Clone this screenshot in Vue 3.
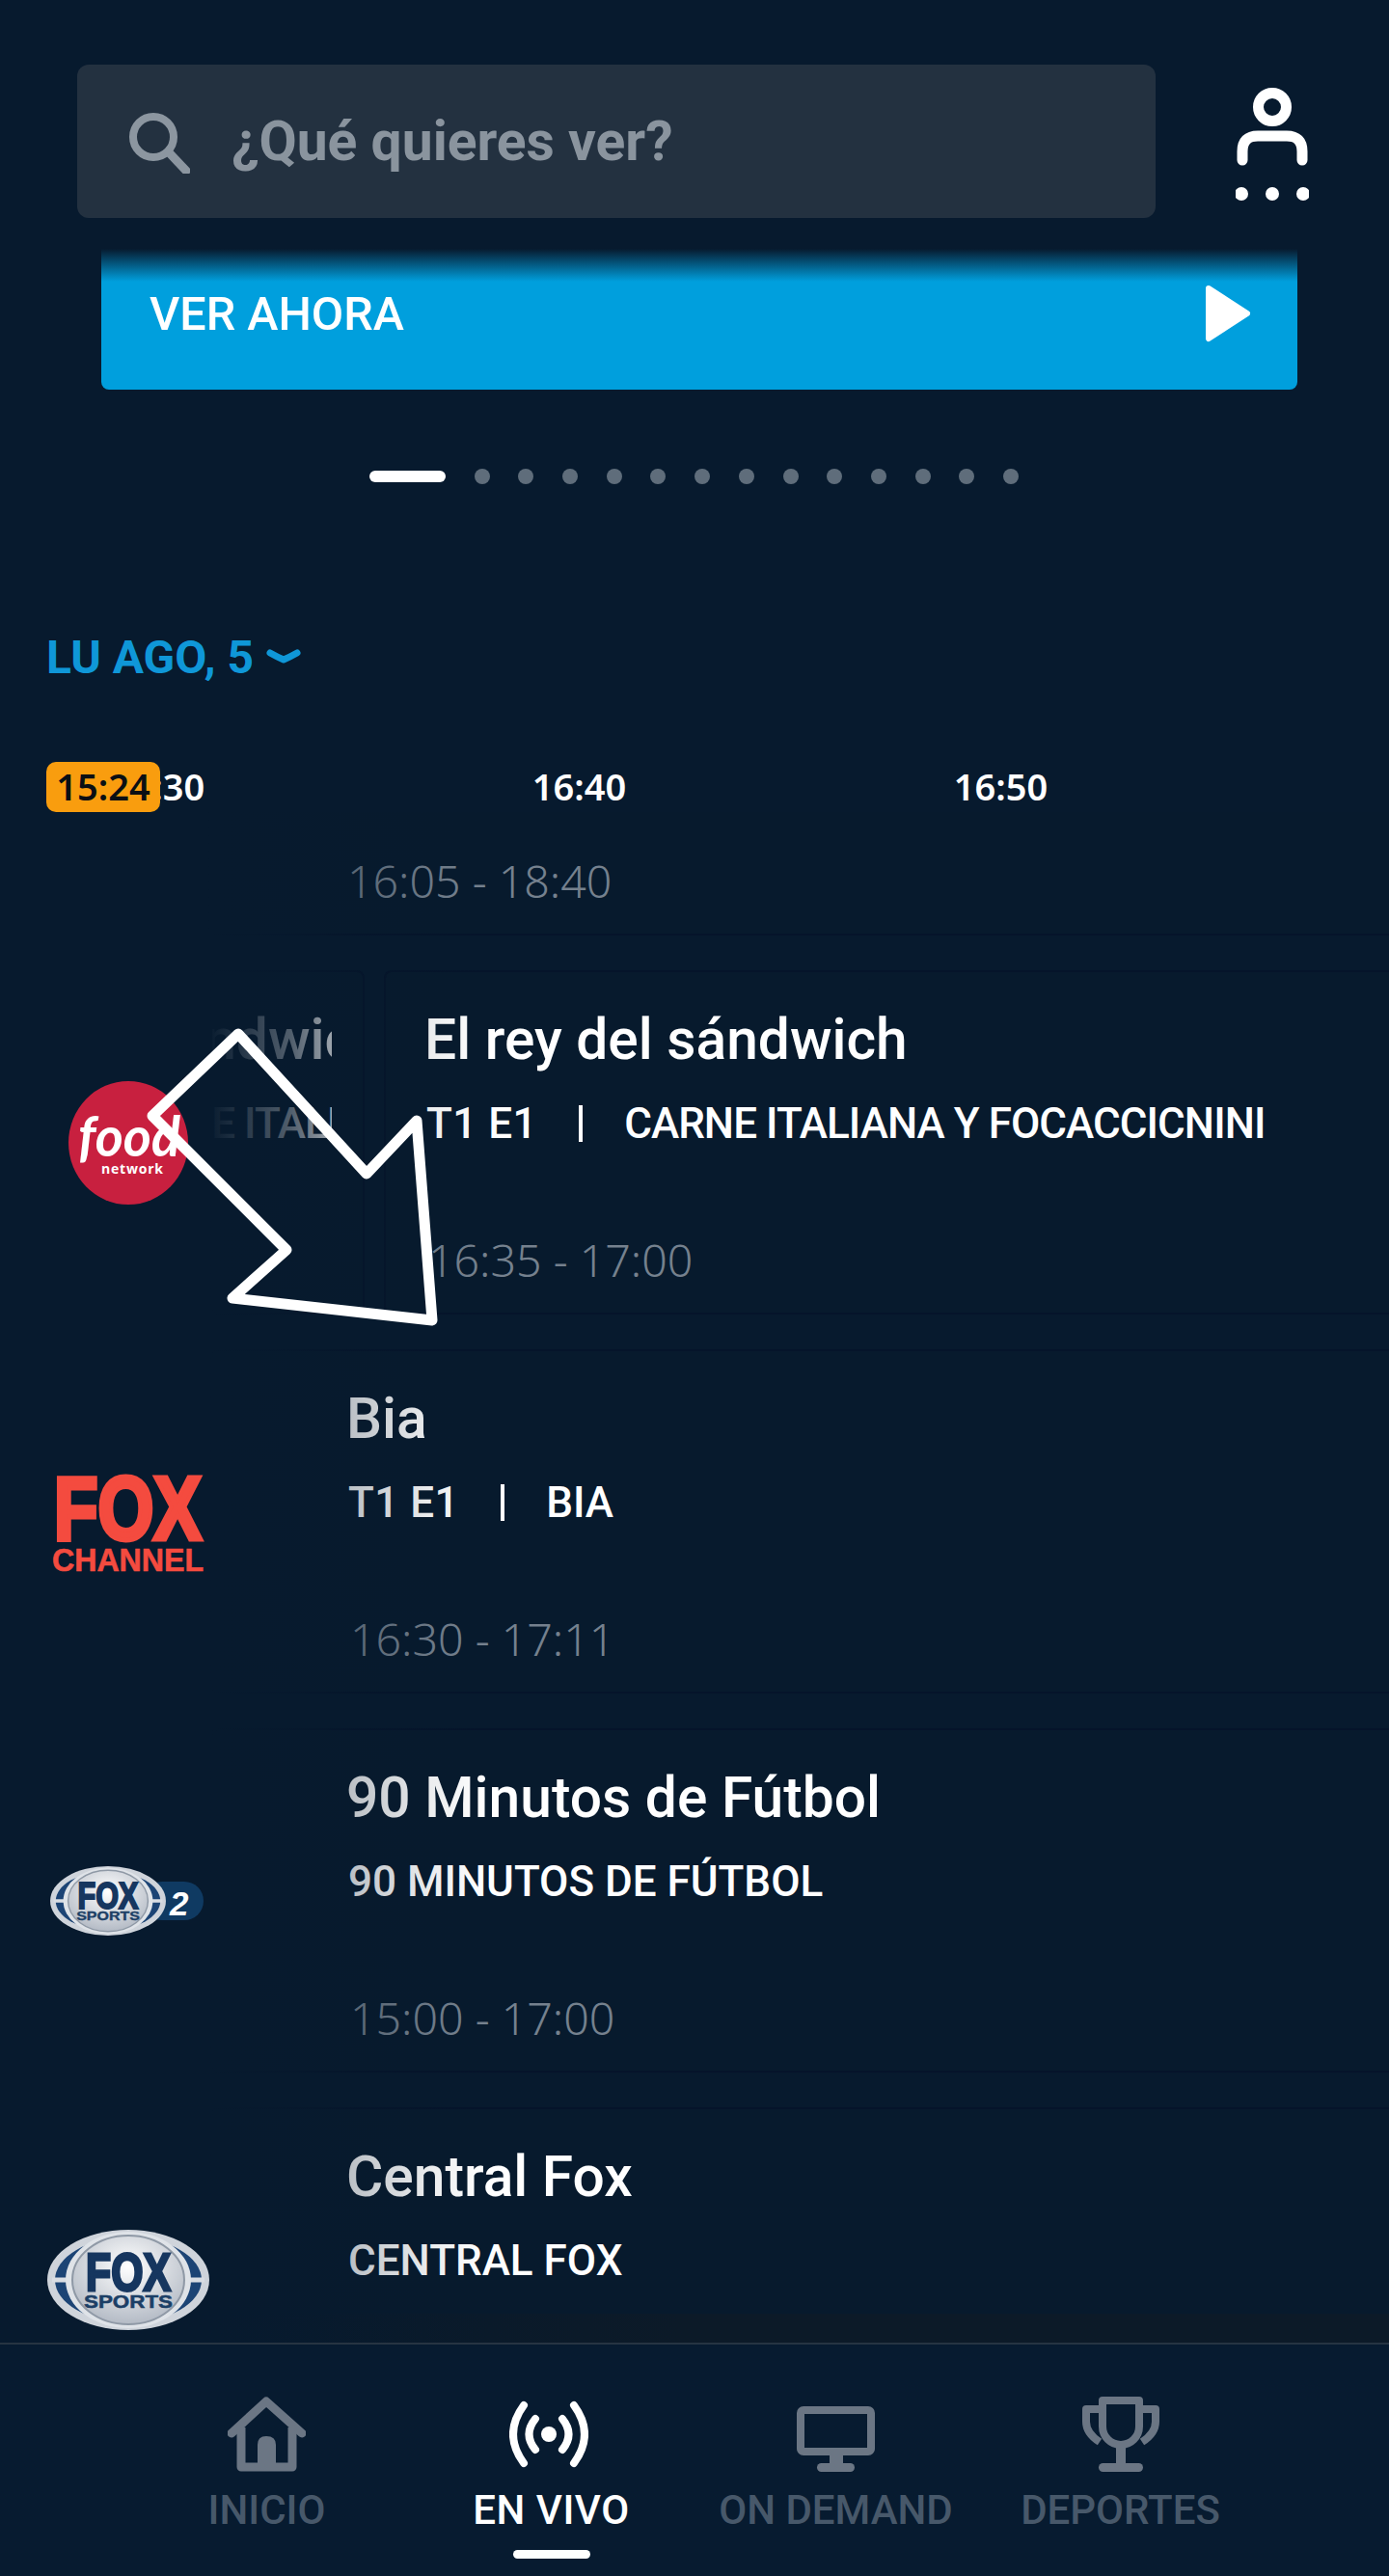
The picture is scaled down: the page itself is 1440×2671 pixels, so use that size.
<script setup>
const ticks = ["16:30", "16:40", "16:50"];
const dots = 13;

const rows = [
  { id: "prev", title: "Sin título", sub: ["T1 E1"], time: "16:05 - 18:40", logo: "" },
  {
    id: "food",
    title: "El rey del sándwich",
    sub: ["T1 E1", "CARNE ITALIANA Y FOCACCICNINI"],
    time: "16:35 - 17:00",
    logo: "food",
    before: true,
  },
  { id: "fox", title: "Bia", sub: ["T1 E1", "BIA"], time: "16:30 - 17:11", logo: "fox" },
  {
    id: "fs2",
    title: "90 Minutos de Fútbol",
    sub: ["90 MINUTOS DE FÚTBOL"],
    time: "15:00 - 17:00",
    logo: "fs2",
  },
  { id: "fs", title: "Central Fox", sub: ["CENTRAL FOX"], time: "", logo: "fs" },
];

const nav = [
  { id: "home", label: "INICIO" },
  { id: "live", label: "EN VIVO", active: true },
  { id: "demand", label: "ON DEMAND" },
  { id: "sports", label: "DEPORTES" },
];

// the small fox sports logo is the same badge, squeezed
const badgeTransform = (logo) =>
  logo === "fs2" ? "translate(64 65) scale(.714 .69) translate(-85 -65)" : "";
</script>

<template>
  <div class="page">
    <header class="top">
      <div class="search">
        <svg class="search-icon" viewBox="0 0 64 64" width="64" height="64">
          <circle cx="26" cy="26" r="21" fill="none" stroke="#8c96a0" stroke-width="8" />
          <path d="M42 42 L60 61" stroke="#8c96a0" stroke-width="9" stroke-linecap="round" />
        </svg>
        <span class="search-text">¿Qué quieres ver?</span>
      </div>
      <svg class="profile" viewBox="0 0 76 118" width="76" height="118">
        <circle cx="38" cy="20" r="14.5" fill="none" stroke="#fff" stroke-width="11" />
        <path d="M7 75 V66 Q7 50 23 50 H53 Q69 50 69 66 V75" fill="none" stroke="#fff" stroke-width="11" stroke-linecap="round" />
        <circle cx="6" cy="110" r="7" fill="#fff" />
        <circle cx="38" cy="110" r="7" fill="#fff" />
        <circle cx="70" cy="110" r="7" fill="#fff" />
      </svg>
    </header>

    <div class="hero">
      <span>VER AHORA</span>
      <svg viewBox="0 0 48 60" width="48" height="60">
        <path d="M4 4 L44 30 L4 56 Z" fill="#fff" stroke="#fff" stroke-width="6" stroke-linejoin="round" />
      </svg>
    </div>

    <div class="dots">
      <i class="pill"></i>
      <i v-for="n in dots" :key="n" class="dot"></i>
    </div>

    <div class="date">
      <span>LU AGO, 5</span>
      <svg viewBox="0 0 36 18" width="36" height="18">
        <path d="M4 4 Q11 8 18 11 Q25 8 32 4" fill="none" stroke="#0f97d8" stroke-width="7" stroke-linecap="round" stroke-linejoin="round" />
      </svg>
    </div>

    <div class="axis">
      <span v-for="t in ticks" :key="t" class="tick">{{ t }}</span>
      <span class="now">15:24</span>
    </div>

    <section class="list">
      <div class="fade"></div>
      <div v-for="row in rows" :key="row.id" class="row">
        <div class="logo">
          <svg v-if="row.logo === 'food'" viewBox="0 0 170 130" width="170" height="130">
            <ellipse cx="85" cy="65" rx="62" ry="64" fill="#c8203f" />
            <text x="33" y="79" class="food" textLength="106" lengthAdjust="spacingAndGlyphs">food</text>
            <text x="57" y="97" class="network" textLength="64">network</text>
          </svg>
          <svg v-else-if="row.logo === 'fox'" viewBox="0 0 170 130" width="170" height="130">
            <text x="8" y="83" class="fox-big" textLength="153" lengthAdjust="spacingAndGlyphs">FOX</text>
            <text x="6" y="116" class="fox-small" textLength="157" lengthAdjust="spacingAndGlyphs">CHANNEL</text>
          </svg>
          <svg v-else-if="row.logo === 'fs2' || row.logo === 'fs'" viewBox="0 0 170 130" width="170" height="130">
            <defs>
              <radialGradient :id="row.id + '-core'" cx="50%" cy="35%" r="75%">
                <stop offset="0" stop-color="#fff" />
                <stop offset="1" stop-color="#a8b0bc" />
              </radialGradient>
            </defs>
            <template v-if="row.logo === 'fs2'">
              <rect x="100" y="45" width="63" height="40" rx="20" fill="#0f3a62" />
              <text x="128" y="80" class="fs2-num">2</text>
            </template>
            <g :transform="badgeTransform(row.logo)">
              <ellipse cx="85" cy="65" rx="84" ry="52" fill="#cfd4db" />
              <ellipse cx="85" cy="65" rx="76" ry="44" fill="#1c4475" />
              <path d="M6 65 H164" stroke="#d9dde3" stroke-width="5" />
              <ellipse cx="85" cy="65" rx="65" ry="50" fill="#dfe3e8" />
              <ellipse cx="85" cy="65" rx="58" ry="46" :fill="'url(#' + row.id + '-core)'" stroke="#8f99a6" stroke-width="2" />
              <text x="41" y="76" class="fs-fox" textLength="88" lengthAdjust="spacingAndGlyphs">FOX</text>
              <text x="39" y="94" class="fs-sports" textLength="92" lengthAdjust="spacingAndGlyphs">SPORTS</text>
            </g>
          </svg>
        </div>

        <div class="track">
          <div v-if="row.before" class="card card-before">
            <div class="clip">
              <div class="shifted">
                <div class="title">{{ row.title }}</div>
                <div class="sub long">
                  <span>{{ row.sub[0] }}</span><i class="bar"></i><span>{{ row.sub[1] }}</span>
                </div>
              </div>
            </div>
          </div>
          <div class="card" :class="{ 'card-open': !row.before }">
            <div class="title">{{ row.title }}</div>
            <div class="sub" :class="{ long: row.before }">
              <template v-for="(part, i) in row.sub" :key="i">
                <i v-if="i > 0" class="bar"></i>
                <span>{{ part }}</span>
              </template>
            </div>
            <div class="time">{{ row.time }}</div>
          </div>
        </div>
      </div>
      <div class="list-end"></div>
    </section>

    <nav class="nav">
      <div v-for="item in nav" :key="item.id" class="nav-item" :class="{ active: item.active }">
        <svg v-if="item.id === 'home'" viewBox="0 0 81 78" width="81" height="78">
          <path d="M4 38 L40 5 L77 38" fill="none" stroke="#6b7684" stroke-width="9" stroke-linecap="round" stroke-linejoin="round" />
          <path d="M14 32 V73 H67 V32" fill="none" stroke="#6b7684" stroke-width="9" stroke-linejoin="round" />
          <path d="M31 73 V50 Q31 41 40 41 Q50 41 50 50 V73 Z" fill="#6b7684" />
        </svg>
        <svg v-else-if="item.id === 'live'" class="live-icon" viewBox="0 0 82 68" width="82" height="78">
          <circle cx="41" cy="34" r="8" fill="#fff" />
          <path d="M15 4 Q-7 34 15 64 M67 4 Q89 34 67 64" fill="none" stroke="#fff" stroke-width="8" stroke-linecap="round" />
          <path d="M27 18 Q14 34 27 50 M55 18 Q68 34 55 50" fill="none" stroke="#fff" stroke-width="8" stroke-linecap="round" />
        </svg>
        <svg v-else-if="item.id === 'demand'" viewBox="0 0 81 78" width="81" height="78">
          <rect x="4" y="14" width="73" height="43" rx="3" fill="none" stroke="#6b7684" stroke-width="8" />
          <rect x="34" y="60" width="14" height="10" fill="#6b7684" />
          <rect x="21" y="69" width="39" height="9" rx="4.5" fill="#6b7684" />
        </svg>
        <svg v-else viewBox="0 0 80 78" width="80" height="78">
          <path d="M21 4 H59 V31 A19 19 0 0 1 21 31 Z" fill="none" stroke="#6b7684" stroke-width="8" stroke-linejoin="round" />
          <path d="M20 13 H4 V26 Q4 38 18 47 M60 13 H76 V26 Q76 38 62 47" fill="none" stroke="#6b7684" stroke-width="8" stroke-linejoin="round" />
          <rect x="35" y="52" width="10" height="20" fill="#6b7684" />
          <rect x="17" y="69" width="46" height="9" rx="4.5" fill="#6b7684" />
        </svg>
        <span class="nav-label">{{ item.label }}</span>
        <i v-if="item.active" class="nav-mark"></i>
      </div>
    </nav>

    <svg class="arrow" viewBox="0 0 310 320" width="310" height="320">
      <path d="M97 12 L230 157 L282 102 L298 309 L91 286 L147 236 L8 97 Z" fill="none" stroke="#fff" stroke-width="11" stroke-linejoin="round" />
    </svg>
  </div>
</template>

<style scoped>
.page {
  position: relative;
  width: 1440px;
  height: 2671px;
  overflow: hidden;
  background: #071a2e;
  font-family: Roboto, "Liberation Sans", sans-serif;
  color: #fff;
}

.top {
  display: flex;
  align-items: flex-start;
  padding: 67px 0 0 80px;
}

.search {
  display: flex;
  align-items: center;
  width: 1118px;
  height: 159px;
  padding-left: 53px;
  box-sizing: border-box;
  background: #233140;
  border-radius: 12px;
}

.search-icon {
  margin-top: 2px;
}

.search-text {
  margin-left: 43px;
  font-size: 57px;
  font-weight: 700;
  color: #8a949e;
}

.profile {
  margin: 24px 0 0 83px;
}

.hero {
  display: flex;
  align-items: center;
  justify-content: space-between;
  box-sizing: border-box;
  width: 1240px;
  height: 146px;
  margin: 32px 0 0 105px;
  padding: 0 48px 0 50px;
  background: linear-gradient(#071a2e 0, #009fdd 34px);
  border-radius: 0 0 8px 8px;
  font-size: 48.5px;
  font-weight: 500;
}

.hero span,
.hero svg {
  margin-bottom: 12px;
}

.dots {
  display: flex;
  align-items: center;
  gap: 29.7px;
  height: 14px;
  margin: 83px 0 0 383px;
}

.pill {
  width: 79px;
  height: 12px;
  background: #fff;
  border-radius: 6px;
}

.dot {
  width: 16px;
  height: 16px;
  background: #5f6d7b;
  border-radius: 50%;
}

.date {
  display: flex;
  align-items: center;
  gap: 13px;
  height: 60px;
  margin: 150px 0 0 48px;
  font-size: 48px;
  font-weight: 700;
  color: #0f97d8;
}

.date svg {
  margin-top: 2px;
}

.axis {
  position: relative;
  display: flex;
  height: 52px;
  margin: 79px 0 0 -55px;
  line-height: 50px;
}

.tick {
  width: 437px;
  text-align: center;
  font-family: "Noto Sans", sans-serif;
  font-size: 38px;
  font-weight: 600;
}

.now {
  position: absolute;
  left: 103px;
  top: 0;
  width: 118px;
  height: 52px;
  background: #f99d0e;
  border-radius: 10px;
  text-align: center;
  font-family: "Noto Sans", sans-serif;
  font-size: 38px;
  font-weight: 600;
  color: #0a0f14;
}

.list {
  position: relative;
  height: 1587px;
  overflow: hidden;
  padding-top: 1px;
  box-sizing: border-box;
}

.fade {
  position: absolute;
  z-index: 1;
  left: 215px;
  top: 0;
  bottom: 0;
  width: 290px;
  background: linear-gradient(
    90deg,
    #071a2e 0,
    rgba(7, 26, 46, 0.7) 30%,
    rgba(7, 26, 46, 0.28) 50%,
    rgba(7, 26, 46, 0.08) 80%,
    rgba(7, 26, 46, 0) 100%
  );
}

.row {
  display: flex;
  height: 357px;
  margin-bottom: 36px;
}

.fade + .row {
  margin-top: -230px;
}

.logo {
  position: relative;
  z-index: 2;
  flex: 0 0 215px;
  display: flex;
  align-items: center;
  padding-left: 48px;
  box-sizing: border-box;
}

.logo svg {
  flex: none;
}

.track {
  flex: 1;
  display: flex;
  gap: 20px;
  min-width: 0;
}

.card {
  flex: 1;
  min-width: 0;
  box-sizing: border-box;
  padding: 35px 0 0 44px;
  background: #071a2d;
  border: 2px solid #05142a;
  border-right: 0;
  border-radius: 8px 0 0 8px;
}

.card-open {
  padding-left: 143px;
}

.card-before {
  flex: 0 0 160px;
  padding: 35px 0 0;
  border-right: 2px solid #05142a;
  border-radius: 8px;
}

.clip {
  width: 124px;
  overflow: hidden;
}

.shifted {
  width: 1000px;
  margin-left: -317px;
}

.title {
  height: 70px;
  margin-left: -4px;
  line-height: 70px;
  font-size: 58.7px;
  font-weight: 500;
  white-space: nowrap;
}

.sub {
  display: flex;
  align-items: center;
  height: 50px;
  margin: 27px 0 0 -2px;
  font-size: 44px;
  font-weight: 500;
  white-space: nowrap;
}

.sub span:first-of-type:not(:last-of-type) {
  letter-spacing: 0.5px;
}

.sub.long span + i + span {
  letter-spacing: -0.95px;
}

.bar {
  width: 4px;
  height: 38px;
  margin: 0 43px;
  background: #fff;
}

.time {
  height: 60px;
  margin-top: 86px;
  line-height: 60px;
  font-family: "Noto Sans", sans-serif;
  font-size: 46.5px;
  font-weight: 300;
  color: #75818e;
  white-space: nowrap;
}

.list-end {
  position: absolute;
  left: 215px;
  right: 0;
  bottom: 0;
  height: 30px;
  background: linear-gradient(90deg, rgba(12, 26, 40, 0), #0c1a28 40%);
}

.nav {
  display: grid;
  grid-template-columns: repeat(4, 295px);
  height: 242px;
  padding-left: 129px;
  box-sizing: border-box;
  background: #071b30;
  border-top: 2px solid #263442;
}

.nav-item {
  display: flex;
  flex-direction: column;
  align-items: center;
  padding-top: 54px;
}

.live-icon {
  margin-right: 5px;
}

.nav-label {
  margin-top: 15px;
  font-size: 42px;
  font-weight: 500;
  line-height: 50px;
  color: #47586a;
}

.active .nav-label {
  color: #fff;
  letter-spacing: 0.5px;
}

.nav-mark {
  width: 80px;
  height: 9px;
  margin-top: 16px;
  background: #fff;
  border-radius: 5px;
}

.arrow {
  position: absolute;
  left: 150px;
  top: 1060px;
  z-index: 3;
}

.food {
  font-family: Lato, sans-serif;
  font-size: 58px;
  font-style: italic;
  font-weight: 700;
  fill: #fff;
}

.network {
  font-family: "Open Sans", sans-serif;
  font-size: 14px;
  font-weight: 700;
  fill: #fff;
}

.fox-big {
  font-family: "Liberation Sans", sans-serif;
  font-size: 92px;
  font-weight: 700;
  fill: #f44b3f;
  stroke: #f44b3f;
  stroke-width: 5px;
  stroke-linejoin: miter;
}

.fox-small {
  font-family: "Liberation Sans", sans-serif;
  font-size: 33px;
  font-weight: 700;
  fill: #f44b3f;
  stroke: #f44b3f;
  stroke-width: 0.6px;
}

.fs2-num {
  font-family: "Liberation Sans", sans-serif;
  font-size: 35px;
  font-style: italic;
  font-weight: 700;
  fill: #fff;
}

.fs-fox {
  font-family: "Liberation Sans", sans-serif;
  font-size: 55px;
  font-weight: 700;
  fill: #16365f;
  stroke: #16365f;
  stroke-width: 3px;
}

.fs-sports {
  font-family: "Liberation Sans", sans-serif;
  font-size: 18.5px;
  font-weight: 700;
  fill: #1c3f66;
  stroke: #1c3f66;
  stroke-width: 0.5px;
}
</style>

<style>
body {
  margin: 0;
  background: #071a2e;
}
</style>
